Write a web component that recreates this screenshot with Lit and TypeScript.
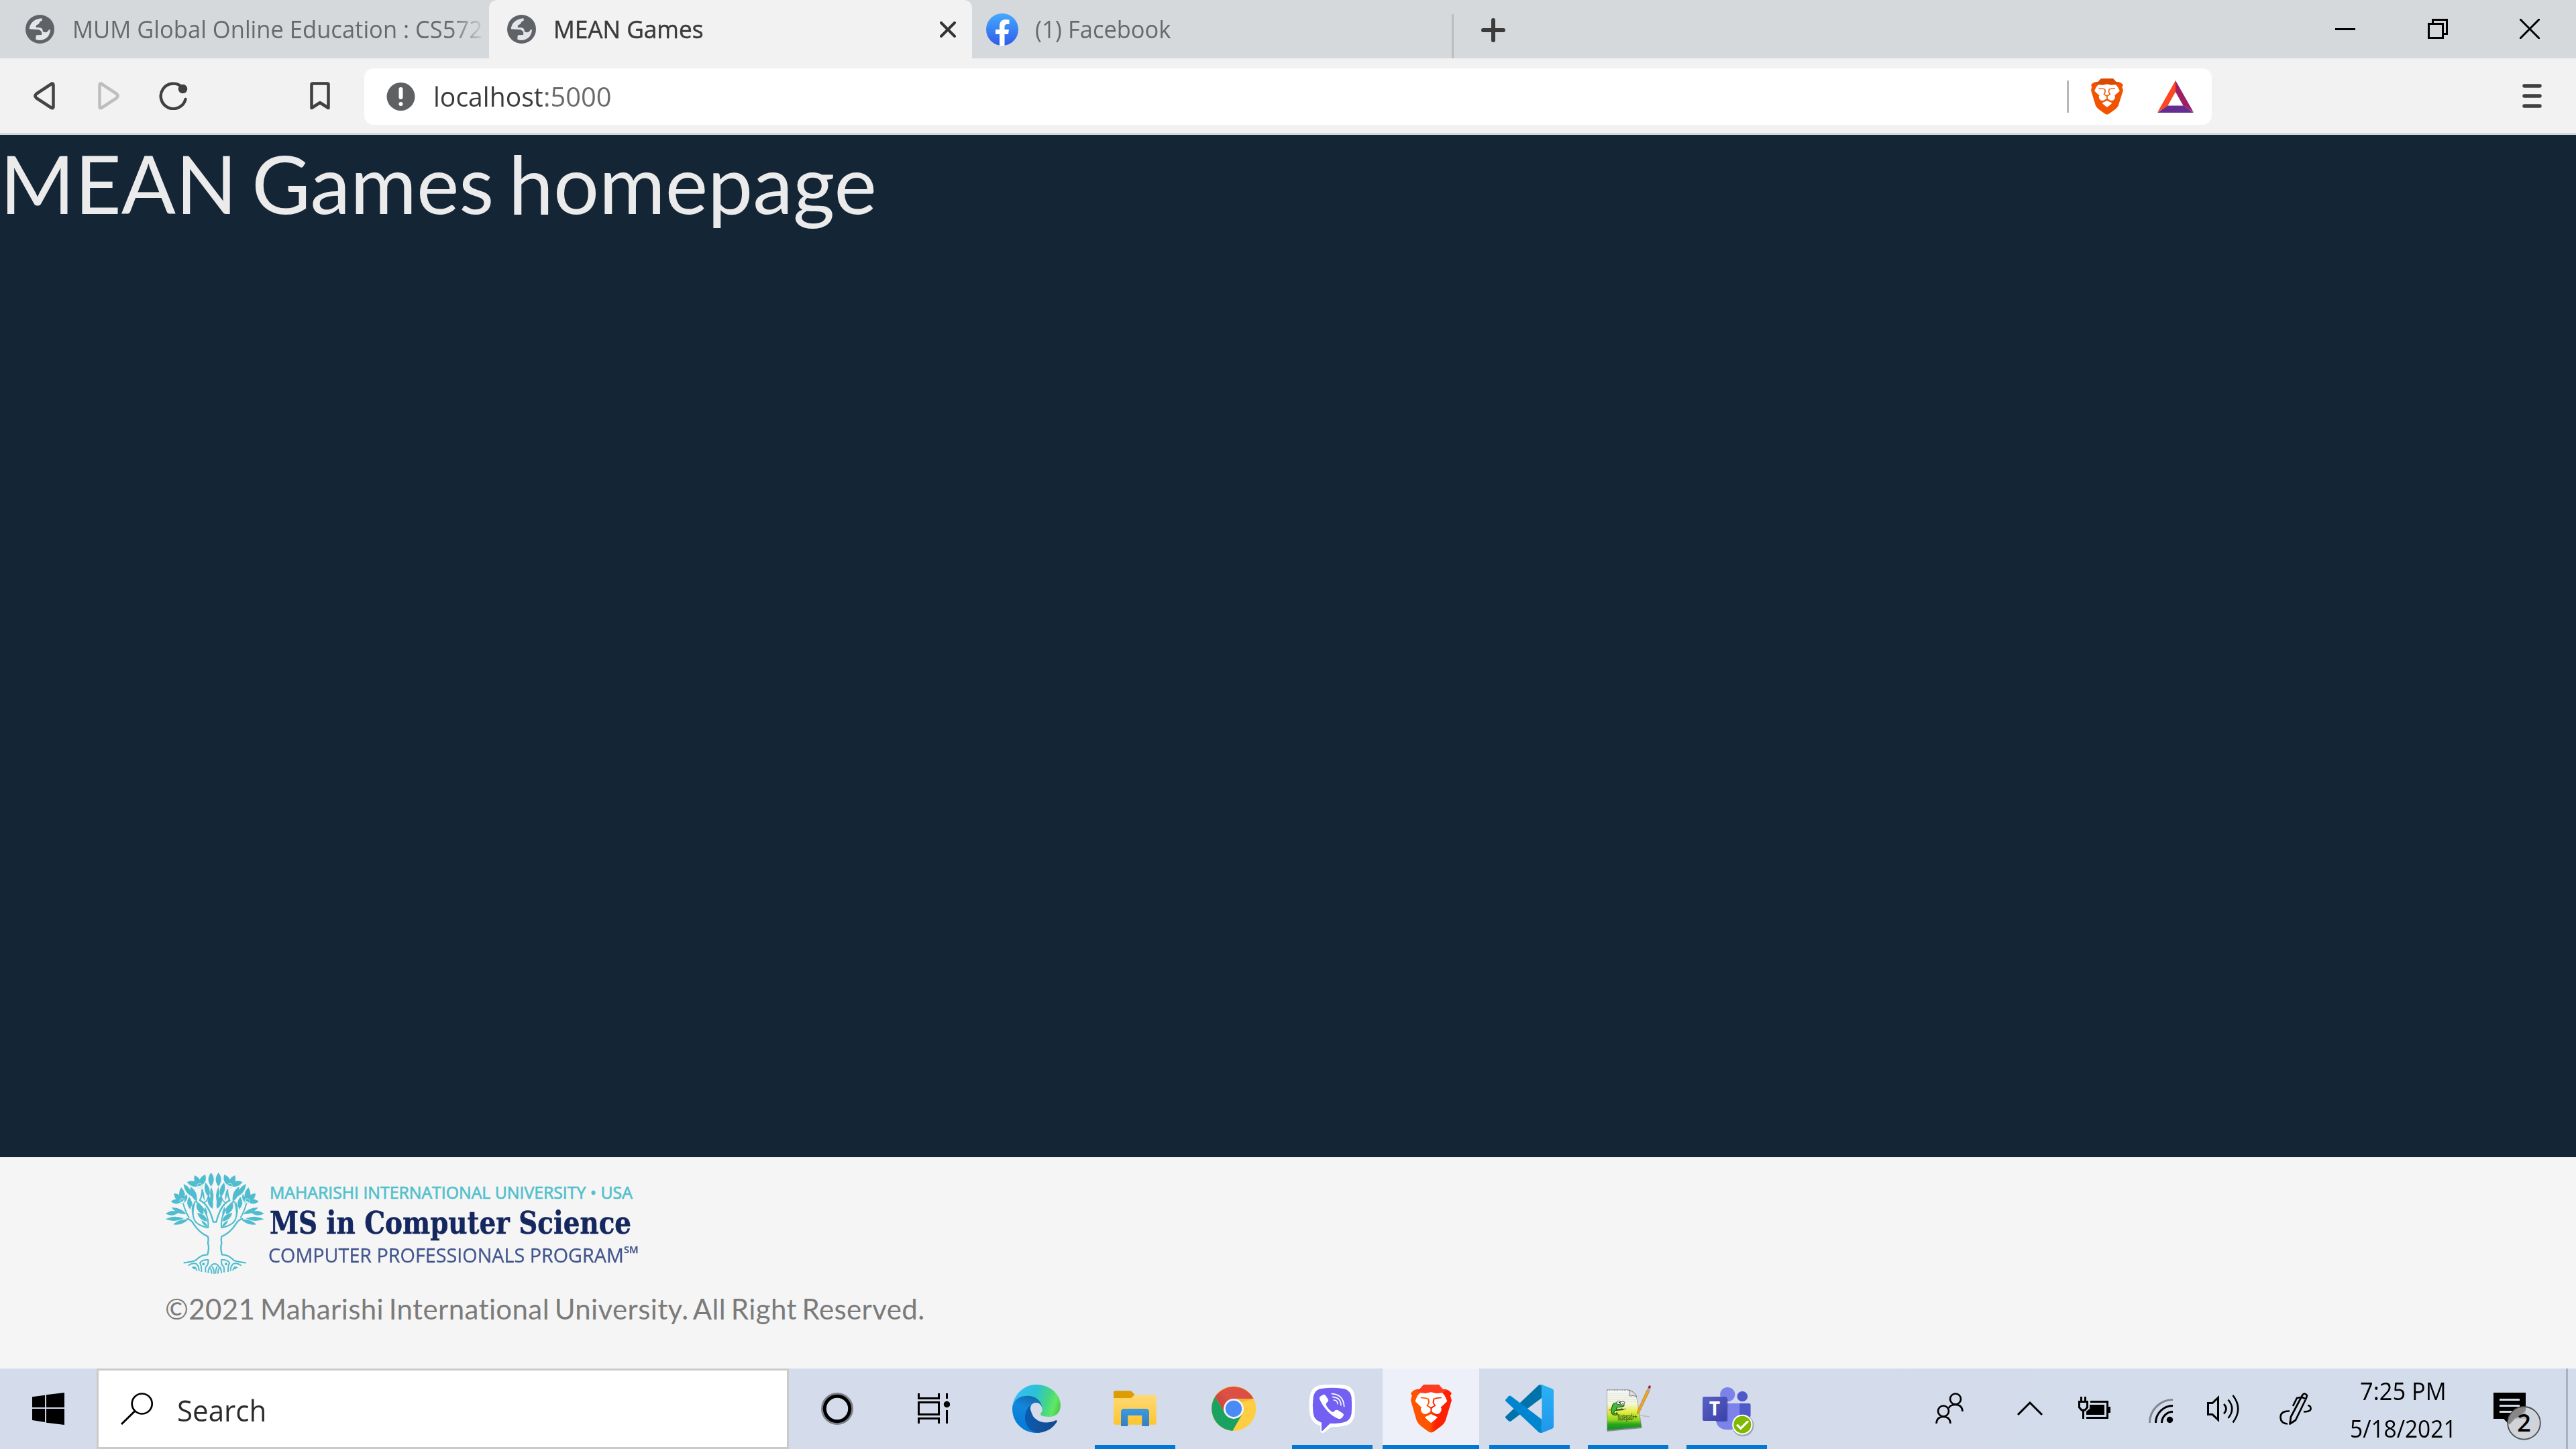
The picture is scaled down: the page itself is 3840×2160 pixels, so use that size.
import { LitElement, html, svg, css } from "lit";
import { customElement, property, state } from "lit/decorators.js";
import { styleMap } from "lit/directives/style-map.js";
import { classMap } from "lit/directives/class-map.js";

/** A single line of text condensed or widened to a fixed measure. */
@customElement("fit-text")
class FitText extends LitElement {
  @property({ type: Number }) width = 100;
  @property() text = "";
  @state() private ratio = 1;

  static styles = css`
    :host { display: block; white-space: nowrap; flex: none; }
    .line { display: inline-block; transform-origin: 0 50%; white-space: pre; }
  `;

  firstUpdated() {
    const line = this.renderRoot.querySelector(".line") as HTMLElement;
    this.ratio = this.width / line.offsetWidth;
  }

  render() {
    return html`<span class="line" style=${styleMap({ transform: `scaleX(${this.ratio})` })}>${this.text}</span>`;
  }
}

const fit = (text: string, width: number) =>
  html`<fit-text .text=${text} .width=${width} style=${styleMap({ width: `${width}px` })}></fit-text>`;

const globe = html`<svg class="fav" width="43" height="43" viewBox="79 70 89 129" preserveAspectRatio="none">
  <ellipse cx="123.500" cy="134.500" rx="44.500" ry="64.500" fill="#5f6368" />
  <path fill="#e3e5e7" d="M130 86C106 88 92 108 91 134L120 137Q129 142 129 151V160L114 161Q110 162 111 181C127 189 143 180 150 164Q155 153 156 137L151 137Q148 148 140 149Q131 147 132 138Q130 127 120 127H112Q110 116 116 114Q121 112 122 105Q124 98 130 97Z" />
</svg>`;

const facebook = html`<svg class="fav" width="48" height="48" viewBox="0 0 48 48">
  <defs><linearGradient id="fb" x1="0" y1="0" x2="0" y2="1"><stop offset="0" stop-color="#45aaff" /><stop offset="1" stop-color="#2f5be8" /></linearGradient></defs>
  <circle cx="24" cy="24" r="24" fill="url(#fb)" />
  <path fill="#fff" d="M20 48V31H14V24H20V19C20 12 24 9 29 9Q32 9 34.500 9.500V16H31.500Q27.500 16 27.500 20V24H34L33 31H27.500V48Q24 48.500 20 48Z" />
</svg>`;

const braveFace = (a: string, b: string, cap: string, w: number, h: number, id: string) => html`<svg width=${w} height=${h} viewBox="154 101 149 218" preserveAspectRatio="none">
  <defs><linearGradient id=${id}><stop offset="0.1" stop-color=${a} /><stop offset="0.46" stop-color=${a} /><stop offset="0.6" stop-color=${b} /></linearGradient></defs>
  <path fill="url(#${id})" d="M201 101H256L271 122Q289 119 303 140L298 151L303 172L281 262Q277 276 266 287L238 313Q228 322 218 313L190 287Q180 276 175 262L154 172L158 151L154 140Q167 119 186 122Z" />
  <path fill=${cap} d="M201 101H256L271 122L286 126L270 138L250 139Q228 131 207 139L188 138L172 126L186 122Z" />
  <path fill="#fff" d="M228 135L248 140L269 138L278 152L287 176L263 204Q269 211 262 226Q256 237 244 233L228 221L212 233Q200 237 194 226Q187 211 193 204L170 176L178 152L188 138L208 140Z" />
  <path fill="#fff" d="M228 234L252 248Q241 263 228 274Q216 263 205 248Z" />
  <path fill="none" stroke=${a} stroke-width="5" d="M190 160L208 162L218 166L220 182L214 196L228 206" />
  <path fill="none" stroke=${b} stroke-width="5" d="M266 160L248 162L238 166L236 182L242 196L228 206" />
  <path fill=${b} d="M216 199L228 204L240 199L231 209V226H226V209Z" />
</svg>`;

const bat = html`<svg width="54" height="48" viewBox="0 0 54 48">
  <path fill="#ff4724" d="M27 0V17L15.500 37.500L0 47.500Z" />
  <path fill="#9e1f63" d="M27 0V17L38.500 37.500L54 47.500Z" />
  <path fill="#662d91" d="M15 37.500H39L54 48H0Z" />
</svg>`;

/* ---- university tree ---- */
const leaf = (x1: number, y1: number, x2: number, y2: number, w: number) => {
  const mx = (x1 + x2) / 2, my = (y1 + y2) / 2;
  const l = Math.hypot(x2 - x1, y2 - y1);
  const nx = (-(y2 - y1) / l) * w * 1.35, ny = ((x2 - x1) / l) * w * 1.35;
  return svg`<path d="M${x1} ${y1}Q${mx + nx} ${my + ny} ${x2} ${y2}Q${mx - nx} ${my - ny} ${x1} ${y1}Z" />`;
};

const leaves: number[][] = [
  [52, 238, 112, 232, 15], [78, 210, 146, 240, 14], [52, 262, 134, 259, 14], [86, 286, 154, 264, 13],
  [76, 184, 127, 182, 15], [90, 147, 128, 184, 18], [122, 120, 130, 184, 19], [148, 150, 136, 190, 10],
  [158, 162, 162, 218, 16], [176, 186, 172, 245, 7],
  [133, 104, 172, 162, 15], [164, 116, 192, 184, 17],
  [148, 96, 206, 112, 18], [182, 66, 206, 114, 18], [230, 62, 206, 114, 19],
  [256, 54, 256, 116, 18], [231, 98, 246, 164, 16], [256, 118, 262, 190, 11], [243, 156, 262, 216, 16],
  [216, 125, 226, 180, 6],
  [191, 192, 222, 240, 18], [194, 234, 240, 272, 16], [212, 268, 242, 298, 8], [228, 206, 238, 250, 7],
];

const halfTree = svg`
  ${leaves.map(([a, b, c, d, w]) => leaf(a, b, c, d, w))}
  <g fill="none" stroke="#4fbdcf" stroke-width="7" stroke-linejoin="round">
    <path d="M146 260Q166 262 178 284Q203 323 242 340Q246 354 242 370Q249 390 240 421Q212 420 186 447Q164 455 133 457" />
    <path d="M184 182Q160 262 200 285Q224 298 243 300Q248 226 186 182" stroke-width="6" />
    <path d="M130 188Q142 232 158 256" stroke-width="6" />
    <path d="M216 128Q216 158 206 178Q246 196 266 275H273" />
    <path d="M243 160Q240 182 222 190" stroke-width="5" />
    <path d="M154 469Q176 456 190 462Q203 474 202 494M171 480Q186 468 192 492" stroke-width="6" />
    <path d="M213 498Q214 468 206 458Q216 442 243 444Q245 466 232 476Q230 490 231 500" stroke-width="6" />
    <path d="M243 504Q242 482 256 472Q261 462 273 462M258 506Q259 490 252 482M269 506Q270 490 262 474" stroke-width="6" />
  </g>
  <circle cx="222" cy="463" r="6" /><circle cx="182" cy="481" r="6" />
  <g fill="none" stroke="#bfe5ec" stroke-width="3"><circle cx="127" cy="181" r="11" /><circle cx="205" cy="113" r="11" /></g>
`;

const tree = html`<svg class="tree" width="148" height="154" viewBox="50 51 444 462">
  <g fill="#4fbdcf">${halfTree}<g transform="translate(545 0) scale(-1 1)">${halfTree}</g></g>
</svg>`;

/* ---- taskbar application icons, 72px square ---- */
const edge = html`<svg width="72" height="72" viewBox="1107 102 216 216">
  <defs>
    <linearGradient id="eg" x1="0" y1="0.400" x2="1" y2="0.600"><stop offset="0" stop-color="#39bbff" /><stop offset="0.450" stop-color="#2bc3d2" /><stop offset="0.720" stop-color="#45d683" /><stop offset="0.880" stop-color="#60e864" /><stop offset="1" stop-color="#4fcc50" /></linearGradient>
    <linearGradient id="eb" x1="0.600" y1="0" x2="0.300" y2="1"><stop offset="0" stop-color="#1469ad" /><stop offset="0.350" stop-color="#1387dc" /><stop offset="1" stop-color="#0078d7" /></linearGradient>
    <linearGradient id="ed"><stop offset="0" stop-color="#0d5bb0" /><stop offset="1" stop-color="#134a8a" /></linearGradient>
  </defs>
  <path fill="url(#eb)" d="M1107 210C1107 170 1140 145 1180 150C1220 153 1243 182 1242 212C1236 186 1222 182 1212 183C1194 185 1186 197 1188 214L1230 317C1160 324 1107 275 1107 210Z" />
  <path fill="url(#ed)" d="M1190 192C1166 212 1158 244 1168 275C1178 302 1200 316 1226 317C1262 314 1290 296 1308 266Q1308 260 1301 262C1272 276 1234 276 1211 255C1192 240 1184 216 1190 192Z" />
  <path fill="url(#eg)" d="M1107 206C1112 145 1160 102 1215 102C1276 102 1323 146 1323 194C1323 232 1296 246 1270 246C1245 246 1231 240 1233 232Q1244 222 1241 205C1237 174 1212 152 1174 152C1138 152 1112 172 1107 206Z" />
</svg>`;

const folder = html`<svg width="72" height="72" viewBox="108 102 216 216">
  <defs><linearGradient id="fo" x1="0" y1="0" x2="0" y2="1"><stop offset="0" stop-color="#ffd977" /><stop offset="1" stop-color="#fdc62f" /></linearGradient>
  <linearGradient id="fc" x1="0" y1="0" x2="0" y2="1"><stop offset="0" stop-color="#3b9ae2" /><stop offset="1" stop-color="#347fc0" /></linearGradient></defs>
  <path fill="url(#fo)" d="M120 160H196L212 148H303Q311 148 311 156V273Q311 281 303 281H128Q120 281 120 273Z" />
  <path fill="#dd9d00" d="M120 137Q120 130 128 130H193Q199 130 203 134L214 147L203 158Q199 162 193 162H120Z" />
  <path fill="url(#fc)" d="M153 288V224Q153 210 167 210H265Q279 210 279 224V288H247V240H184V288Z" />
</svg>`;

const chrome = html`<svg width="72" height="72" viewBox="549 102 216 216">
  <defs><linearGradient id="cr" x1="0" y1="0.500" x2="1" y2="0"><stop offset="0" stop-color="#c8473c" /><stop offset="0.300" stop-color="#dc5146" /><stop offset="1" stop-color="#de4b3f" /></linearGradient></defs>
  <circle cx="657" cy="209" r="100" fill="#ffcd42" />
  <path fill="#1aa260" d="M574 156A100 100 0 0 0 652 309L697 231L657 209L620 232Z" />
  <path fill="url(#cr)" d="M574 156A100 100 0 0 1 746 165H657L620 232Z" />
  <path fill="#e0a92e" opacity="0.600" d="M657 165H746L694 180Z" />
  <circle cx="657" cy="210" r="45" fill="#f3f3f3" />
  <circle cx="657" cy="210" r="36.500" fill="#4a8af4" />
</svg>`;

const viber = html`<svg width="72" height="72" viewBox="990 102 216 216">
  <path fill="#fff" d="M1098 101Q1150 101 1172 110Q1194 122 1198 152Q1202 195 1198 238Q1192 268 1172 280Q1146 292 1092 292L1062 316Q1050 322 1045 312V286Q1006 276 998 236Q991 195 998 152Q1004 120 1026 110Q1048 101 1098 101Z" />
  <path fill="#7360f2" d="M1098 116Q1142 116 1160 124Q1180 134 1184 158Q1187 195 1184 232Q1180 256 1162 266Q1142 276 1088 276L1054 309Q1050 312 1050 306V272Q1018 262 1013 232Q1008 195 1013 158Q1018 132 1036 124Q1054 116 1098 116Z" />
  <path fill="#fff" d="M1044 155L1058 147Q1064 145 1068 151L1079 167Q1083 174 1077 179L1071 185Q1068 190 1072 197Q1082 214 1097 224Q1102 227 1106 222L1111 217Q1117 213 1124 217L1146 231Q1151 236 1148 241L1141 251Q1134 257 1124 254Q1098 244 1078 222Q1052 194 1041 166Q1039 159 1044 155Z" />
  <g fill="none" stroke="#fff" stroke-width="5" stroke-linecap="round"><path d="M1096 143Q1148 146 1151 200" /><path d="M1100 157Q1136 160 1137 194" /><path d="M1105 171Q1121 172 1122 188" /></g>
</svg>`;

const vscode = html`<svg width="72" height="72" viewBox="500 102 176 216" preserveAspectRatio="none">
  <defs><linearGradient id="vr" x1="0" y1="0" x2="0" y2="1"><stop offset="0" stop-color="#29b2f4" /><stop offset="1" stop-color="#2196ec" /></linearGradient></defs>
  <path fill="#0073ad" d="M621 105Q626 101 633 102V161L520 266Q516 269 512 265L502 253Q498 248 502 243Z" />
  <path fill="#0086d0" d="M502 177Q498 172 502 167L512 154Q516 150 520 153L633 258V318Q626 319 621 314Z" />
  <path fill="url(#vr)" d="M633 102L671 121Q676 124 676 130V290Q676 296 671 299L633 318Q628 318 624 316Q632 314 633 308V112Q632 105 624 104Q628 101 633 102Z" />
</svg>`;

const notepad = html`<svg class="spill" width="72" height="72" viewBox="860 102 176 216" preserveAspectRatio="none">
  <defs><linearGradient id="np" x1="0" y1="0" x2="0" y2="1"><stop offset="0" stop-color="#fafafa" /><stop offset="0.350" stop-color="#f3f7da" /><stop offset="0.550" stop-color="#e2ee3c" /><stop offset="0.750" stop-color="#8fd421" /><stop offset="0.850" stop-color="#2aa51f" /><stop offset="1" stop-color="#0d8f22" /></linearGradient></defs>
  <path fill="#888d94" d="M870 306L998 292V297L872 312Z" />
  <path fill="#b9bfca" d="M985 236L1028 243L1022 249L988 241Z" />
  <path fill="url(#np)" stroke="#777" stroke-width="1.500" d="M871 125H950Q978 140 981 170L997 292L872 306Z" />
  <path stroke="#c9d3d8" stroke-width="1.500" d="M872 141H955M872 150H972M872 159H976M872 168H979M872 177H980" />
  <path stroke="#777" stroke-width="5" stroke-dasharray="2 4" d="M873 127H949" />
  <path fill="#ddd" stroke="#555" stroke-width="2" d="M950 126Q956 140 954 153Q968 149 979 155Q974 136 950 126Z" />
  <path stroke="#b44" stroke-width="3" d="M877 216L940 211" />
  <path fill="#3fba3d" stroke="#173f17" stroke-width="2.500" d="M890 200Q892 182 910 182Q926 184 934 197Q924 204 912 202Q903 206 906 214L926 210L930 215L900 218Q893 226 899 233Q906 234 907 227Q913 235 903 239Q890 239 887 226Q885 212 890 200Z" />
  <circle cx="914" cy="183" r="8" fill="#fff" stroke="#222" stroke-width="2" /><circle cx="928" cy="185" r="8" fill="#fff" stroke="#222" stroke-width="2" />
  <circle cx="916" cy="182" r="2.500" /><circle cx="929" cy="186" r="2.500" />
  <text x="911" y="263" font-family="Liberation Sans" font-size="42" fill="#1a2a10" textLength="70" lengthAdjust="spacingAndGlyphs" transform="rotate(-3 911 263)">Notepad++</text>
  <path fill="#f1a51e" stroke="#9c6a16" stroke-width="1.500" d="M1017 125L1026 131L988 228L981 234L982 220Z" />
  <path fill="#9fb1bf" d="M1020 116L1029 121L1026 131L1017 126Z" /><path fill="#a92738" d="M1023 107Q1028 104 1031 109L1029 121L1020 117Z" />
</svg>`;

const teams = html`<svg class="spill" width="72" height="72" viewBox="1220 102 176 216" preserveAspectRatio="none">
  <defs><linearGradient id="tm" x1="0" y1="0" x2="1" y2="1"><stop offset="0" stop-color="#5a62c3" /><stop offset="1" stop-color="#3a41ac" /></linearGradient></defs>
  <ellipse cx="1311" cy="146" rx="27" ry="32" fill="#7b83eb" />
  <ellipse cx="1365" cy="155" rx="19" ry="23" fill="#5059c9" />
  <path fill="#5059c9" d="M1350 186H1389Q1395 186 1395 193V240Q1390 275 1350 275Z" />
  <path fill="#7b83eb" d="M1269 186H1355V260Q1352 304 1312 304Q1269 302 1269 254Z" />
  <path fill="#464aa0" opacity="0.500" d="M1269 160H1308Q1313 163 1313 170V262Q1311 270 1304 270H1269Z" />
  <rect x="1220" y="156" width="88" height="108" rx="7" fill="url(#tm)" />
  <text x="1264" y="240" font-family="Open Sans" font-weight="700" font-size="84" fill="#fff" text-anchor="middle" textLength="40" lengthAdjust="spacingAndGlyphs">T</text>
  <ellipse cx="1367" cy="285" rx="40" ry="49" fill="#8d9099" opacity="0.700" />
  <ellipse cx="1365" cy="281" rx="37" ry="45" fill="#fff" />
  <ellipse cx="1365" cy="281" rx="32" ry="39" fill="#7fba00" />
  <path fill="none" stroke="#fff" stroke-width="9" d="M1345 281L1359 298L1386 265" />
</svg>`;

/* ---- taskbar system icons ---- */
const windowsLogo = html`<svg width="48" height="48" viewBox="125 138 126 144" preserveAspectRatio="none"><path d="M125 157L175 149V204H125ZM180 148L251 138V204H180ZM125 210H175V270L125 261ZM180 210H251V282L180 272Z" /></svg>`;
const magnifier = html`<svg width="48" height="48" viewBox="0 0 48 48"><g fill="none" stroke="#000" stroke-width="2.700"><circle cx="31.700" cy="16.500" r="15" /><path d="M21 27.500L1 47" stroke-width="3" /></g></svg>`;
const cortana = html`<svg width="48" height="48" viewBox="0 0 48 48"><circle cx="24" cy="24" r="22.500" fill="none" stroke="#7b808b" stroke-width="3" /><circle cx="24" cy="24" r="18.700" fill="none" stroke="#000" stroke-width="5" /></svg>`;
const taskView = html`<svg width="48" height="48" viewBox="0 0 48 48"><g fill="none" stroke="#000" stroke-width="3"><path d="M1.500 1V8.500H31.500V1M1.500 46V38.500H31.500V46M1.500 14.500H31.500V32.500H1.500ZM43.500 1V9M43.500 26V46" /></g><circle cx="43.500" cy="17.500" r="4.700" /></svg>`;
const people = html`<svg width="48" height="48" viewBox="0 0 48 48"><g fill="none" stroke="#000" stroke-width="2.700"><circle cx="33" cy="9.500" r="8" /><circle cx="15" cy="27.500" r="8" /><path d="M4.500 46Q5 36 15 36Q25 36 25.500 46M23 23Q25 18 33 18Q43 18 43.500 28" /></g></svg>`;
const chevron = html`<svg width="48" height="48" viewBox="0 0 48 48"><path d="M6 33L24 15L42 33" fill="none" stroke="#000" stroke-width="3" /></svg>`;
const battery = html`<svg width="48" height="48" viewBox="0 0 48 48"><path fill="none" stroke="#000" stroke-width="3" d="M18 13.500H43.500V37.500H12M1.500 13.500H13.500V22L10 26H5L1.500 22ZM4.500 6V13M10.500 6V13M7.500 26V39" /><path d="M17 18H39V33H12V28L17 24ZM44 21H48V30H44Z" /></svg>`;
const wifi = html`<svg width="48" height="48" viewBox="0 0 48 48"><g fill="none" stroke="#000" stroke-width="3"><path stroke="#828892" d="M10.500 45A34.500 34.500 0 0 1 45 10.500" /><path d="M19.500 45A25.500 25.500 0 0 1 45 19.500M28.500 45A16.500 16.500 0 0 1 45 28.500" /></g><circle cx="40.500" cy="40.500" r="4.700" /></svg>`;
const speaker = html`<svg width="48" height="48" viewBox="0 0 48 48"><g fill="none" stroke="#000" stroke-width="3"><path d="M1.500 15.500H8L16.500 7.500V40.500L8 32.500H1.500Z" /><path stroke-width="2.600" d="M25 17Q32 24 25 31.500M31.500 10.500Q43 24 31.500 38M38.500 4Q54 24 38.500 44.500" /></g></svg>`;
const pen = html`<svg width="48" height="48" viewBox="0 0 48 48"><g fill="none" stroke="#000" stroke-width="2.700" stroke-linejoin="round"><path d="M15.500 46.500L17 36L34 4Q37 -1 41 4L40 8L24 41ZM32 6L40 10M15 27.500Q1.500 27 1.500 37Q2 46 12 46.500M20 20L26 8L31 7M42 19Q47 19 46.500 25Q45 28.500 36 28.500" /></g></svg>`;
const note = html`<svg class="spill" width="48" height="48" viewBox="0 0 48 48">
  <path fill-rule="evenodd" d="M0 0H48V39H33L24 48L15 39H0ZM9 9V12H39V9ZM9 18V21H39V18ZM9 27V30H39V27Z" />
  <circle cx="45.500" cy="45.300" r="24.300" fill="#cfd1d5" fill-opacity="0.880" stroke="#4b4d50" stroke-width="1.800" />
  <path d="M22 47Q23 26 42 22.500H48V26Q41 35 31 39L24 47Z" fill="#878787" />
  <text x="45.500" y="57.500" font-family="Open Sans" font-size="36" font-weight="600" text-anchor="middle">2</text>
</svg>`;

const apps: { icon: unknown; open?: boolean; active?: boolean }[] = [
  { icon: edge },
  { icon: folder, open: true },
  { icon: chrome },
  { icon: viber, open: true },
  { icon: braveFace("#ff5500", "#ff2000", "#ff3c22", 61, 72, "b1"), open: true, active: true },
  { icon: vscode, open: true },
  { icon: notepad, open: true },
  { icon: teams, open: true },
];

@customElement("app-root")
class AppRoot extends LitElement {
  static styles = css`
    :host { display: flex; flex-direction: column; width: 3840px; height: 2160px; overflow: hidden; font-family: "Open Sans", "Noto Sans", sans-serif; color: #3b3b3b; }
    * { box-sizing: border-box; }
    svg { display: block; flex: none; }
    .spill { overflow: visible; }

    .tabs { display: flex; height: 87px; background: #d5d9dc; font-size: 36px; line-height: 87px; flex: none; }
    .tab { display: flex; align-items: center; height: 87px; color: #696969; flex: none; }
    .tab fit-text { height: 87px; }
    .tab.first { width: 729px; padding-left: 38px; gap: 27px; }
    .fade { -webkit-mask-image: linear-gradient(90deg, #000 562px, transparent 618px); mask-image: linear-gradient(90deg, #000 562px, transparent 618px); }
    .tab.current { width: 720px; padding: 0 24px 0 27px; gap: 26px; background: #f2f2f2; border-radius: 12px 12px 0 0; color: #3b3b3b; -webkit-text-stroke: 0.5px #3b3b3b; }
    .tab.current .x { margin-left: auto; }
    .tab.last { width: 715px; padding-left: 21px; gap: 25px; }
    .divider { width: 3px; height: 66px; margin-top: 21px; background: #bcbdbc; }
    .plus { align-self: center; margin-left: 41px; margin-top: 3px; }
    .controls { display: flex; margin-left: auto; width: 413px; height: 86px; }
    .control { flex: 1; display: flex; align-items: center; justify-content: center; }

    .toolbar { display: flex; align-items: center; height: 114px; padding: 0 51px 0 18px; background: #f2f2f2; border-bottom: 3px solid #d5d7da; flex: none; }
    .tool { width: 96px; display: flex; justify-content: center; }
    .tool.mark { margin-left: 123px; }
    .address { display: flex; align-items: center; width: 2754px; height: 84px; margin: 3px 0 0 18px; padding: 0 27px 0 33px; background: #fff; border-radius: 14px; font-size: 41px; }
    .address fit-text { height: 84px; line-height: 82px; }
    .address .host { margin-left: 27px; color: #3b3b3b; }
    .address .port { color: #6a6a6a; }
    .rule { width: 3px; height: 48px; background: #b4b8bb; margin: 0 33px 0 auto; }
    .lion { margin-right: 51px; }
    .menu { margin-left: auto; }

    .page { flex: 1; background: #142536; }
    h1 { margin: 0; font: 400 120px/144px Lato, sans-serif; word-spacing: -9px; color: #ebebeb; }

    footer { height: 315px; background: #f5f5f5; padding: 22px 0 0 246px; flex: none; }
    .brand { display: flex; height: 156px; }
    .words { display: flex; flex-direction: column; margin-left: 8px; }
    .uni { font-size: 24.800px; line-height: 32px; color: #52c0cc; margin-top: 14px; height: 32px; -webkit-text-stroke: 0.7px #52c0cc; }
    .degree { font: 700 46px/54px "Roboto Slab", "DejaVu Serif", serif; color: #15275f; margin-top: 3px; height: 54px; -webkit-text-stroke: 0.6px #15275f; }
    .program { display: flex; font-size: 29.500px; line-height: 40px; height: 40px; color: #42568e; margin: 1px 0 0 -2px; -webkit-text-stroke: 0.3px #42568e; }
    .sm { font-size: 14px; line-height: 23px; font-weight: 600; }
    .copy { font: 400 42px/54px Lato, sans-serif; color: #7b7b7b; margin-top: 21px; word-spacing: -3.400px; letter-spacing: 0.380px; }

    .taskbar { display: flex; height: 120px; background: linear-gradient(90deg, #d4dbeb 0 2820px, #d3dceb 3050px); flex: none; }
    .start, .system { width: 144px; display: flex; align-items: center; justify-content: center; }
    .search { display: flex; align-items: center; width: 1032px; border: 3px solid #cacaca; background: #fff; padding-left: 33px; gap: 36px; font-size: 44px; line-height: 118px; color: #2b2b2b; }
    .search fit-text { height: 114px; }
    .apps { display: flex; gap: 3px; margin-left: 9px; }
    .app { width: 144px; height: 120px; display: grid; grid-template-rows: 114px 6px; justify-items: center; align-items: center; }
    .app svg { margin-top: 6px; }
    .app.active { background: #edf0f8; }
    .bar { width: 120px; height: 6px; }
    .open .bar { background: #0078d7; }
    .active .bar { width: 144px; }
    .tray { display: flex; align-items: center; gap: 48px; margin-left: 236px; color: #000; }
    .tray .up { margin-left: 24px; }
    .tray .ink { margin-left: 12px; }
    .clock { display: flex; flex-direction: column; align-items: center; width: 160px; margin-left: 8px; font-size: 36px; line-height: 56px; height: 112px; margin-top: 3px; }
    .tray .notes { margin-left: 7px; }
    .edge { width: 3px; height: 120px; background: #a9b2be; margin-left: 12px; }
  `;

  render() {
    return html`
      <div class="tabs">
        <div class="tab first">${globe}<div class="fade">${fit("MUM Global Online Education : CS572", 611)}</div></div>
        <div class="tab current">${globe}${fit("MEAN Games", 223)}
          <svg class="x" width="24" height="24" viewBox="0 0 24 24"><path d="M2 2L22 22M22 2L2 22" stroke="#333" stroke-width="4" stroke-linecap="round" /></svg>
        </div>
        <div class="tab last">${facebook}${fit("(1) Facebook", 202)}</div>
        <div class="divider"></div>
        <svg class="plus" width="36" height="36" viewBox="0 0 36 36"><path d="M18 3V33M3 18H33" stroke="#3b3b3b" stroke-width="6" stroke-linecap="round" /></svg>
        <div class="controls">
          <div class="control"><svg width="30" height="30" viewBox="0 0 30 30"><path d="M0 15.500H30" stroke="#000" stroke-width="3" /></svg></div>
          <div class="control"><svg width="30" height="30" viewBox="0 0 30 30"><path d="M1.500 7.500H22.500V28.500H1.500ZM7.500 7V1.500H28.500V22.500H23" fill="none" stroke="#000" stroke-width="3" /></svg></div>
          <div class="control"><svg width="30" height="30" viewBox="0 0 30 30"><path d="M0 0L30 30M30 0L0 30" stroke="#000" stroke-width="3" /></svg></div>
        </div>
      </div>

      <div class="toolbar">
        <div class="tool"><svg width="32" height="42" viewBox="0 0 32 42"><path d="M27.500 2.500Q29.500 2.500 29.500 5V37Q29.500 40 27 39L4 24Q1 21 4 18Z" fill="none" stroke="#444" stroke-width="4.500" stroke-linejoin="round" /></svg></div>
        <div class="tool"><svg width="32" height="42" viewBox="0 0 32 42"><path d="M4.500 2.500Q2.500 2.500 2.500 5V37Q2.500 40 5 39L28 24Q31 21 28 18Z" fill="none" stroke="#bebebe" stroke-width="4.500" stroke-linejoin="round" /></svg></div>
        <div class="tool"><svg width="43" height="42" viewBox="0 0 43 42"><path d="M39.500 26A18.700 18.700 0 1 1 34 7.500" fill="none" stroke="#404040" stroke-width="4.400" stroke-linecap="round" /><circle cx="35.500" cy="10.500" r="6.800" fill="#404040" /></svg></div>
        <div class="tool mark"><svg width="30" height="42" viewBox="0 0 30 42"><path d="M2.500 4Q2.500 2.500 4 2.500H26Q27.500 2.500 27.500 4V39L15 31L2.500 39Z" fill="none" stroke="#404040" stroke-width="4.500" stroke-linejoin="round" /></svg></div>
        <div class="address">
          <svg width="43" height="42" viewBox="0 0 43 42"><circle cx="21.500" cy="21" r="21" fill="#5f6062" /><path d="M21.500 10V22" stroke="#fff" stroke-width="6" stroke-linecap="round" /><circle cx="21.500" cy="32" r="3" fill="#fff" /></svg>
          <div class="host">${fit("localhost", 164)}</div><div class="port">${fit(":5000", 102)}</div>
          <div class="rule"></div>
          <div class="lion">${braveFace("#f25300", "#f25300", "#dc4a00", 48, 54, "b0")}</div>
          ${bat}
        </div>
        <svg class="menu" width="29" height="36" viewBox="0 0 29 36"><path d="M3 3H26M3 18H26M3 33H26" stroke="#404040" stroke-width="5.500" stroke-linecap="round" /></svg>
      </div>

      <main class="page"><h1>MEAN Games homepage</h1></main>

      <footer>
        <div class="brand">
          ${tree}
          <div class="words">
            <div class="uni">${fit("MAHARISHI INTERNATIONAL UNIVERSITY • USA", 541)}</div>
            <div class="degree">${fit("MS in Computer Science", 539)}</div>
            <div class="program">${fit("COMPUTER PROFESSIONALS PROGRAM", 530)}<div class="sm">${fit("SM", 22)}</div></div>
          </div>
        </div>
        <div class="copy">©2021 Maharishi International University. All Right Reserved.</div>
      </footer>

      <div class="taskbar">
        <div class="start">${windowsLogo}</div>
        <div class="search">${magnifier}${fit("Search", 133)}</div>
        <div class="system">${cortana}</div>
        <div class="system">${taskView}</div>
        <div class="apps">
          ${apps.map((a) => html`<div class=${classMap({ app: true, open: !!a.open, active: !!a.active })}>${a.icon}<div class="bar"></div></div>`)}
        </div>
        <div class="tray">
          ${people}
          <div class="up">${chevron}</div>
          ${battery}${wifi}${speaker}
          <div class="ink">${pen}</div>
          <div class="clock">${fit("7:25 PM", 129)}${fit("5/18/2021", 159)}</div>
          <div class="notes">${note}</div>
          <div class="edge"></div>
        </div>
      </div>
    `;
  }
}
